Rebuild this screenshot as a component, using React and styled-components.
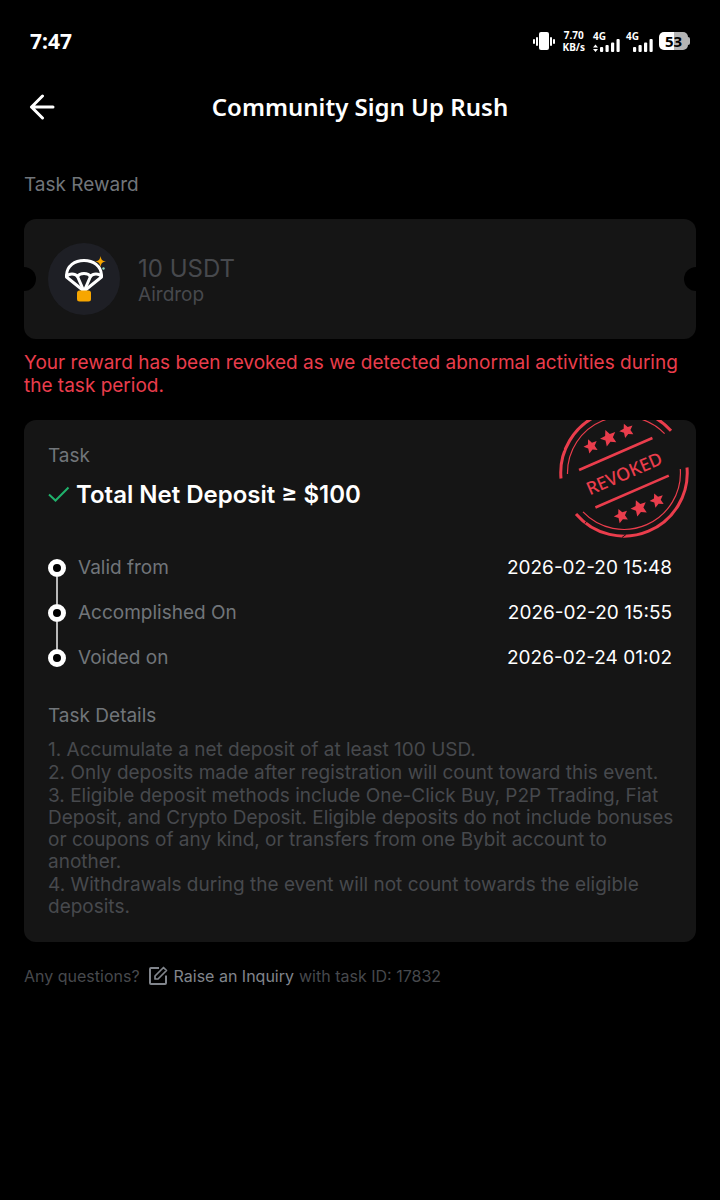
import React from 'react';
import styled, { createGlobalStyle } from 'styled-components';

const GlobalStyle = createGlobalStyle`
  * {
    box-sizing: border-box;
  }

  body {
    margin: 0;
    background: #000;
    color: #fff;
    font-family: Inter, Roboto, sans-serif;
  }
`;

const Page = styled.div`
  min-height: 100vh;
  background: #000;
`;

const StatusBar = styled.div`
  display: flex;
  align-items: center;
  justify-content: space-between;
  height: 82px;
  padding: 0 30px;
  font-family: 'Noto Sans', sans-serif;
  font-weight: 700;
`;

const Clock = styled.span`
  font-size: 21px;
  line-height: 24px;
`;

const StatusIcons = styled.div`
  display: flex;
  align-items: center;
  gap: 6px;
`;

const NetSpeed = styled.span`
  display: flex;
  flex-direction: column;
  align-items: center;
  padding: 0 2px;
  font-size: 10px;
  line-height: 12px;
`;

const Signal = styled.span`
  display: flex;
  flex-direction: column;
  width: 27px;
  font-size: 10px;
  line-height: 10px;

  svg {
    margin-top: -2px;
  }
`;

const Battery = styled.span`
  display: flex;
  align-items: center;
`;

const BatteryBody = styled.span`
  width: 29px;
  height: 18px;
  border-radius: 5px;
  background: linear-gradient(90deg, #fff 53%, #b4b4b4 53%);
  color: #000;
  font-size: 15px;
  line-height: 18px;
  text-align: center;
`;

const BatteryTip = styled.span`
  width: 2px;
  height: 8px;
  border-radius: 0 2px 2px 0;
  background: #b4b4b4;
`;

const Header = styled.header`
  display: grid;
  grid-template-columns: 36px 1fr 36px;
  align-items: center;
  height: 49px;
  padding: 0 24px;
`;

const BackButton = styled.button`
  display: flex;
  align-items: center;
  justify-content: center;
  width: 36px;
  height: 36px;
  padding: 0;
  border: none;
  background: none;
  color: #fff;
  cursor: pointer;
`;

const Title = styled.h1`
  margin: 0;
  font-family: 'Noto Sans', sans-serif;
  font-size: 24px;
  font-weight: 600;
  line-height: 32px;
  text-align: center;
`;

const Content = styled.main`
  padding: 42px 24px 24px;
`;

const SectionLabel = styled.h2`
  margin: 0;
  color: #71757a;
  font-size: 19px;
  font-weight: 400;
  line-height: 24px;
`;

const RewardCard = styled.section`
  position: relative;
  display: flex;
  align-items: center;
  gap: 18px;
  height: 120px;
  margin-top: 22px;
  padding: 0 24px;
  border-radius: 12px;
  background: #151515;
  overflow: hidden;

  &::before,
  &::after {
    content: '';
    position: absolute;
    top: 48px;
    width: 24px;
    height: 24px;
    border-radius: 50%;
    background: #000;
  }

  &::before {
    left: -12px;
  }

  &::after {
    right: -12px;
  }
`;

const RewardIcon = styled.div`
  width: 72px;
  height: 72px;
  border-radius: 50%;
  background: #1e1f25;
`;

const RewardText = styled.div`
  padding-top: 4px;
  color: #47494d;
`;

const Amount = styled.div`
  font-size: 24px;
  line-height: 28px;
`;

const RewardType = styled.div`
  font-size: 19px;
  line-height: 24px;
`;

const Warning = styled.p`
  margin: 12px 0 23px;
  color: #ea3d4c;
  font-size: 19px;
  line-height: 23px;
`;

const TaskCard = styled.section`
  position: relative;
  padding: 24px;
  border-radius: 12px;
  background: #151515;
  overflow: hidden;
`;

const Stamp = styled.svg`
  position: absolute;
  top: -13px;
  right: 6px;
`;

const TaskName = styled.h3`
  display: flex;
  align-items: center;
  gap: 6px;
  margin: 12px 0 0;
  font-size: 24px;
  font-weight: 600;
  line-height: 30px;
`;

const Timeline = styled.dl`
  display: flex;
  flex-direction: column;
  gap: 21px;
  margin: 46px 0 34px;
`;

const Step = styled.div`
  display: flex;
  align-items: center;
  gap: 12px;
  font-size: 19px;
  line-height: 24px;
`;

const Dot = styled.span`
  position: relative;
  width: 18px;
  height: 18px;
  border: 5px solid #fff;
  border-radius: 50%;
  background: #000;

  ${Step}:not(:last-child) &::after {
    content: '';
    position: absolute;
    top: 13px;
    left: 3px;
    width: 2px;
    height: 27px;
    background: #b9b9b9;
  }
`;

const StepLabel = styled.dt`
  flex: 1;
  color: #71757a;
`;

const StepTime = styled.dd`
  margin: 0;
`;

const Details = styled.ol`
  display: flex;
  flex-direction: column;
  gap: 1px;
  margin: 11px -4px 0 0;
  padding: 0;
  list-style: none;
  color: #47494d;
  font-size: 19px;
  line-height: 22px;
`;

const Footer = styled.p`
  display: flex;
  align-items: center;
  margin: 24px 0 0;
  color: #47494d;
  font-size: 16px;
  line-height: 20px;
`;

const InquiryLink = styled.a`
  display: flex;
  align-items: center;
  gap: 6px;
  margin: 0 5px 0 8px;
  color: #81858c;
  text-decoration: none;
`;

const steps = [
  { label: 'Valid from', time: '2026-02-20 15:48' },
  { label: 'Accomplished On', time: '2026-02-20 15:55' },
  { label: 'Voided on', time: '2026-02-24 01:02' },
];

const details = [
  '1. Accumulate a net deposit of at least 100 USD.',
  '2. Only deposits made after registration will count toward this event.',
  '3. Eligible deposit methods include One-Click Buy, P2P Trading, Fiat Deposit, and Crypto Deposit. Eligible deposits do not include bonuses or coupons of any kind, or transfers from one Bybit account to another.',
  '4. Withdrawals during the event will not count towards the eligible deposits.',
];

const VibrateIcon = () => (
  <svg width="22" height="18" viewBox="0 0 22 18" fill="#fff">
    <rect x="6" y="0" width="10" height="18" rx="2" />
    <rect x="3" y="5" width="2" height="9" rx="1" />
    <rect x="17" y="5" width="2" height="9" rx="1" />
    <rect x="0" y="7" width="2" height="5" rx="1" />
    <rect x="20" y="7" width="2" height="5" rx="1" />
  </svg>
);

const SignalBars = ({ active }) => (
  <svg width="27" height="13" viewBox="0 0 27 13" fill="#fff">
    {active && <path d="M2.500 5.500 5 8.500H0zM2.500 13 0 10h5z" />}
    <rect x="7" y="8" width="3.200" height="5" rx="1" />
    <rect x="12.500" y="6" width="3.200" height="7" rx="1" />
    <rect x="18" y="3.500" width="3.200" height="9.500" rx="1" />
    <rect x="23.500" y="0" width="3.200" height="13" rx="1" />
  </svg>
);

const ArrowIcon = () => (
  <svg width="26" height="26" viewBox="0 0 26 26" fill="none" stroke="#fff" strokeWidth="3" strokeLinecap="round" strokeLinejoin="round">
    <path d="M24 13H2.500M13.500 2 2.500 13l11 11" />
  </svg>
);

const AirdropIcon = () => (
  <svg width="72" height="72" viewBox="0 0 72 72" fill="none">
    <g stroke="#fff" strokeWidth="3" strokeLinejoin="round">
      <path d="M18.500 34V32C19 23 26.500 17.500 36 17.500S53 23 53.500 32v2L38 46.500h-4z" />
      <path d="M18.500 33.500c2.500-3.500 8.500-3.500 11 0 2.500-4 10.500-4 13 0 2.500-3.500 8.500-3.500 11 0" />
      <path d="M29.500 33.500 35 46M42.500 33.500 37 46" />
    </g>
    <rect x="29" y="47.500" width="14" height="11" rx="2.500" fill="#f7a600" />
    <path d="M52.500 13c.6 3.700 1.800 4.900 5.500 5.500-3.700.6-4.900 1.800-5.500 5.500-.6-3.700-1.800-4.900-5.500-5.500 3.700-.6 4.900-1.800 5.500-5.500z" fill="#f7a600" />
    <circle cx="55.500" cy="25.500" r="1.200" fill="#8fd9c4" />
  </svg>
);

const CheckIcon = () => (
  <svg width="22" height="18" viewBox="0 0 22 18" fill="none" stroke="#20b26c" strokeWidth="2">
    <path d="m1 8.500 6.500 6L20.500 1.500" />
  </svg>
);

const EditIcon = () => (
  <svg width="20" height="20" viewBox="0 0 20 20" fill="none" stroke="#81858c" strokeWidth="2" strokeLinejoin="round">
    <path d="M11 2H3a1 1 0 0 0-1 1v14a1 1 0 0 0 1 1h14a1 1 0 0 0 1-1V9.500" />
    <path d="M7 13v-3l8.500-8.500 3 3L10 13z" strokeWidth="1.700" />
  </svg>
);

const STAR = 'M0-7.200 2.200-2.600 7.200-2.200 3.500 1.200 4.500 6.300 0 3.900-4.500 6.300-3.500 1.200-7.200-2.200-2.200-2.600z';

const RevokedStamp = () => (
  <Stamp width="132" height="132" viewBox="-66 -66 132 132" role="img" aria-label="Revoked">
    <g fill="none" stroke="#ea3d4c">
      <path d="M-63 5.500A63.200 63.200 0 0 1 47-42.300" strokeWidth="3" />
      <path d="M63-5.500A63.200 63.200 0 0 1-48 41" strokeWidth="3" />
      <path d="M-56.500 1A56.500 56.500 0 0 1 40.600-39.300" strokeWidth="1.200" />
      <path d="M56.300-4A56.500 56.500 0 0 1-41 38.900" strokeWidth="1.200" />
    </g>
    {/* worn spots in the ink */}
    <path d="M-39 50.500-36 46M-2 64.500 2 61.500M-60-23l-4-1.500" stroke="#151515" strokeWidth="1" />
    <g transform="rotate(-23.500)" fill="#ea3d4c">
      <rect x="-40" y="-22" width="80" height="2.600" />
      <rect x="-40" y="19" width="80" height="2.600" />
      <text y="7" textAnchor="middle" fontFamily="'Noto Sans', sans-serif" fontSize="18" fontWeight="500">REVOKED</text>
      <path d={STAR} transform="translate(-19.500 -38)" />
      <path d={STAR} transform="translate(0 -38.500) scale(1.150)" />
      <path d={STAR} transform="translate(19.500 -38)" />
      <path d={STAR} transform="translate(-19.500 38)" />
      <path d={STAR} transform="translate(0 38) scale(1.150)" />
      <path d={STAR} transform="translate(19.500 38)" />
    </g>
  </Stamp>
);

const App = () => {
  return (
    <Page>
      <GlobalStyle />
      <StatusBar>
        <Clock>7:47</Clock>
        <StatusIcons>
          <VibrateIcon />
          <NetSpeed>
            <span>7.70</span>
            <span>KB/s</span>
          </NetSpeed>
          <Signal>
            4G
            <SignalBars active />
          </Signal>
          <Signal>
            4G
            <SignalBars />
          </Signal>
          <Battery>
            <BatteryBody>53</BatteryBody>
            <BatteryTip />
          </Battery>
        </StatusIcons>
      </StatusBar>

      <Header>
        <BackButton type="button" aria-label="Back">
          <ArrowIcon />
        </BackButton>
        <Title>Community Sign Up Rush</Title>
      </Header>

      <Content>
        <SectionLabel>Task Reward</SectionLabel>
        <RewardCard>
          <RewardIcon>
            <AirdropIcon />
          </RewardIcon>
          <RewardText>
            <Amount>10 USDT</Amount>
            <RewardType>Airdrop</RewardType>
          </RewardText>
        </RewardCard>
        <Warning>
          Your reward has been revoked as we detected abnormal activities during the task period.
        </Warning>

        <TaskCard>
          <RevokedStamp />
          <SectionLabel>Task</SectionLabel>
          <TaskName>
            <CheckIcon />
            Total Net Deposit ≥ $100
          </TaskName>
          <Timeline>
            {steps.map((step) => (
              <Step key={step.label}>
                <Dot />
                <StepLabel>{step.label}</StepLabel>
                <StepTime>{step.time}</StepTime>
              </Step>
            ))}
          </Timeline>
          <SectionLabel>Task Details</SectionLabel>
          <Details>
            {details.map((item) => (
              <li key={item}>{item}</li>
            ))}
          </Details>
        </TaskCard>

        <Footer>
          Any questions?
          <InquiryLink href="#inquiry">
            <EditIcon />
            Raise an Inquiry
          </InquiryLink>
          with task ID: 17832
        </Footer>
      </Content>
    </Page>
  );
};

export default App;
